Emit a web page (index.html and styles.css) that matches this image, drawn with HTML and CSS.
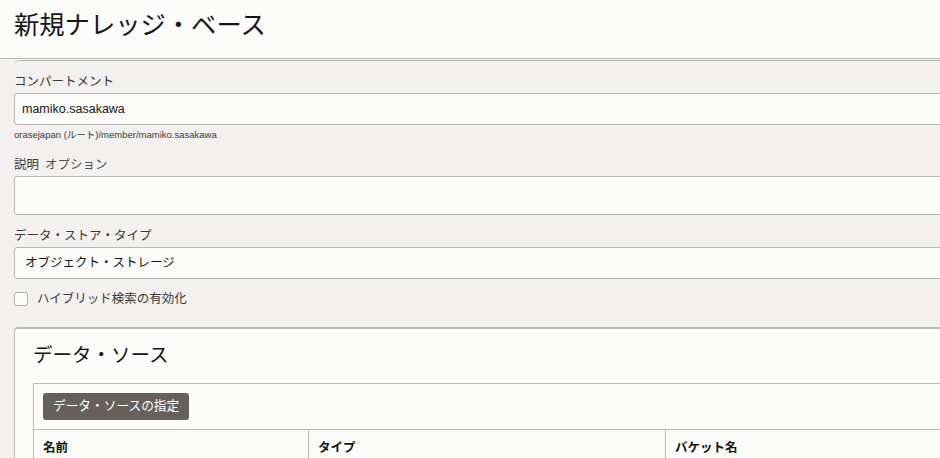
FILE: index.html
```html
<!DOCTYPE html>
<html lang="ja">
<head>
<meta charset="utf-8">
<title>新規ナレッジ・ベース</title>
<link rel="stylesheet" href="styles.css">
</head>
<body>
<header class="page-header">
  <h1 class="page-title">新規ナレッジ・ベース</h1>
</header>
<main class="wrap">
  <form class="form">
    <label class="label">コンパートメント</label>
    <div class="field field-input">mamiko.sasakawa</div>
    <div class="help">orasejapan (ルート)/member/mamiko.sasakawa</div>

    <label class="label label-gap">説明<span class="opt">オプション</span></label>
    <div class="field field-area"></div>

    <label class="label label-gap2">データ・ストア・タイプ</label>
    <div class="field field-select">オブジェクト・ストレージ</div>

    <div class="check-row">
      <span class="checkbox"></span>
      <span class="check-label">ハイブリッド検索の有効化</span>
    </div>

    <section class="panel">
      <h2 class="panel-title">データ・ソース</h2>
      <div class="table-box">
        <div class="toolbar">
          <button type="button" class="btn">データ・ソースの指定</button>
        </div>
        <div class="thead">
          <div class="th">名前</div>
          <div class="th">タイプ</div>
          <div class="th">バケット名</div>
        </div>
      </div>
    </section>
  </form>
</main>
</body>
</html>
```
FILE: styles.css
```css
html, body {
  margin: 0;
  padding: 0;
  overflow: hidden;
}
body {
  background: #f2f1ef;
  font-family: "Liberation Sans", "Noto Sans CJK JP", sans-serif;
  color: #312d2a;
  width: 940px;
  height: 458px;
}
.page-header {
  background: #fcfcfa;
  border-bottom: 1px solid #bcb9b5;
  padding-left: 14px;
  box-sizing: border-box;
  height: 59px;
}
.page-title {
  margin: 0;
  padding-top: 8px;
  font-weight: normal;
  font-size: 25.3px;
  line-height: 34px;
  color: #161513;
  white-space: nowrap;
}
.wrap {
  padding-top: 1px;
  padding-left: 14px;
  overflow: hidden;
  height: 398px;
}
.form {
  width: 1100px;
  border-top: 1px solid #bcb9b5;
  border-top-left-radius: 6px;
  padding-top: 12px;
  display: flex;
  flex-direction: column;
  align-items: stretch;
}
.label {
  display: block;
  font-size: 12.5px;
  line-height: 18px;
  height: 18px;
  color: #3b3835;
  margin-bottom: 2px;
  white-space: nowrap;
}
.label-gap { margin-top: 15px; }
.label-gap2 { margin-top: 12px; }
.opt {
  margin-left: 6px;
  color: #55514d;
}
.field {
  background: #fcfcfa;
  border: 1px solid #b9b5b0;
  border-radius: 3px;
  box-sizing: border-box;
  font-size: 12.5px;
  color: #161513;
}
.field-input {
  height: 32px;
  line-height: 30px;
  padding-left: 7px;
}
.field-area {
  height: 39px;
}
.field-select {
  height: 32px;
  line-height: 30px;
  padding-left: 10px;
}
.help {
  font-size: 9.5px;
  line-height: 13px;
  margin-top: 3px;
  color: #3b3835;
  white-space: nowrap;
}
.check-row {
  margin-top: 11px;
  display: flex;
  align-items: center;
  height: 18px;
}
.checkbox {
  width: 14px;
  height: 14px;
  box-sizing: border-box;
  border: 1px solid #b3afaa;
  border-radius: 3px;
  background: #fcfcfa;
}
.check-label {
  margin-left: 9px;
  font-size: 12.5px;
  line-height: 18px;
  color: #3b3835;
  white-space: nowrap;
}
.panel {
  margin-top: 19px;
  background: #fcfcfa;
  border: 1px solid #bcb8b3;
  border-top: 2px solid #bcb8b3;
  border-radius: 4px 4px 0 0;
  padding: 12px 0 0 18px;
}
.panel-title {
  margin: 0;
  font-weight: normal;
  font-size: 19.5px;
  line-height: 28px;
  color: #161513;
}
.table-box {
  margin-top: 14px;
  border: 1px solid #bcb8b3;
  border-right: none;
}
.toolbar {
  padding: 9px 9px;
  display: flex;
}
.btn {
  height: 27px;
  background: #665f5b;
  color: #ffffff;
  border: none;
  border-radius: 3px;
  padding: 0 10px;
  font-family: "Liberation Sans", "Noto Sans CJK JP", sans-serif;
  font-size: 12.7px;
  line-height: 27px;
  white-space: nowrap;
}
.thead {
  display: grid;
  grid-template-columns: 274px 357px 1fr;
  border-top: 1px solid #bcb8b3;
}
.th {
  font-weight: bold;
  font-size: 12.5px;
  line-height: 18px;
  padding: 9px 9px 6px;
  color: #161513;
  white-space: nowrap;
}
.th + .th {
  border-left: 1px solid #bcb8b3;
}
```
